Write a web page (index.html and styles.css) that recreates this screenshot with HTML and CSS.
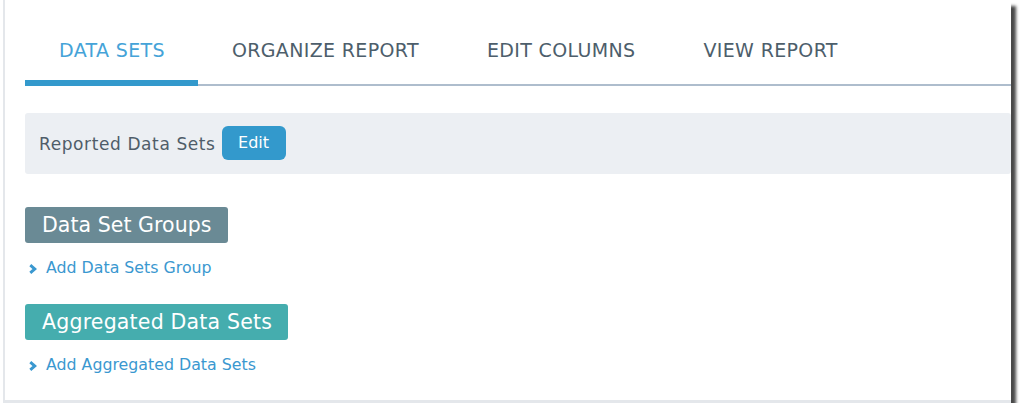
FILE: index.html
```html
<!DOCTYPE html>
<html>
<head>
<meta charset="utf-8">
<link rel="stylesheet" href="styles.css">
</head>
<body>
<div class="card">
  <nav class="tabs">
    <div class="tab active">DATA SETS</div>
    <div class="tab">ORGANIZE REPORT</div>
    <div class="tab">EDIT COLUMNS</div>
    <div class="tab">VIEW REPORT</div>
  </nav>
  <div class="panel">
    <span class="panel-label">Reported Data Sets</span>
    <button class="btn">Edit</button>
  </div>
  <div class="badge badge-groups">Data Set Groups</div>
  <a class="link"><svg class="chev" width="8" height="10" viewBox="0 0 8 10"><polyline points="1.3,1.2 5.8,5 1.3,8.8" fill="none" stroke="currentColor" stroke-width="3"/></svg>Add Data Sets Group</a>
  <div class="badge badge-agg">Aggregated Data Sets</div>
  <a class="link"><svg class="chev" width="8" height="10" viewBox="0 0 8 10"><polyline points="1.3,1.2 5.8,5 1.3,8.8" fill="none" stroke="currentColor" stroke-width="3"/></svg>Add Aggregated Data Sets</a>
</div>
</body>
</html>
```
FILE: styles.css
```css
html, body {
  margin: 0;
  padding: 0;
  background: #ffffff;
}
body {
  font-family: "DejaVu Sans", "Open Sans", sans-serif;
}
.card {
  box-sizing: border-box;
  margin-left: 3px;
  width: 1008px;
  height: 403px;
  background: #ffffff;
  border-left: 2px solid #e4e7eb;
  border-bottom: 3px solid #e4e7eb;
  box-shadow: 5px 6px 3px rgba(40, 40, 40, 0.85);
  padding-left: 20px;
  display: flex;
  flex-direction: column;
  align-items: flex-start;
}
.tabs {
  align-self: stretch;
  display: flex;
  border-bottom: 2px solid #aebdcd;
  height: 84px;
}
.tab {
  box-sizing: border-box;
  height: 86px;
  margin-bottom: -2px;
  padding: 40px 34px 0;
  font-size: 19px;
  line-height: 20px;
  color: #4d5e6b;
  letter-spacing: 0.35px;
}
.tab.active {
  color: #45a3d8;
  border-bottom: 6px solid #3399cc;
  padding: 40px 33px 0 34px;
}
.panel {
  align-self: stretch;
  box-sizing: border-box;
  margin-top: 27px;
  height: 61px;
  background: #eceff3;
  border-radius: 3px;
  padding: 0 14px;
  display: flex;
  align-items: center;
  gap: 6px;
}
.panel-label {
  font-size: 17px;
  letter-spacing: 0.6px;
  color: #4f5d69;
}
.btn {
  box-sizing: border-box;
  height: 34px;
  width: 64px;
  margin-top: -2px;
  border: none;
  border-radius: 6px;
  background: #3399cc;
  color: #ffffff;
  font-family: inherit;
  font-size: 16px;
  padding: 0;
}
.badge {
  box-sizing: border-box;
  height: 36px;
  display: flex;
  align-items: center;
  padding: 0 17px;
  color: #ffffff;
  font-size: 20.5px;
  letter-spacing: 0.2px;
  white-space: nowrap;
  border-radius: 3px;
}
.badge-groups {
  margin-top: 33px;
  width: 203px;
  background: #6a8a95;
  letter-spacing: 0.05px;
}
.badge-agg {
  margin-top: 27px;
  width: 263px;
  background: #45adae;
}
.link {
  margin-top: 14px;
  display: flex;
  align-items: center;
  height: 20px;
  font-size: 15.8px;
  color: #3a98d0;
  padding-left: 4px;
  white-space: nowrap;
}
.chev {
  margin-right: 9px;
  margin-top: 3px;
  color: #3a98d0;
}
```
